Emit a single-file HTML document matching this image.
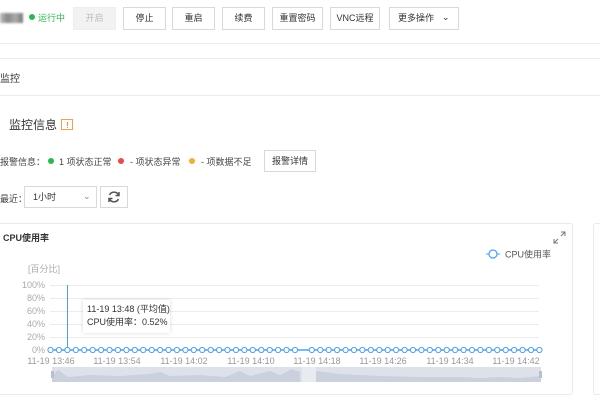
<!DOCTYPE html>
<html><head><meta charset="utf-8"><style>
*{box-sizing:border-box;margin:0;padding:0}
body{width:600px;height:400px;overflow:hidden;background:#fff;font-family:"Liberation Sans","Noto Sans CJK SC",sans-serif;color:#333;position:relative}
.a{position:absolute;white-space:nowrap}
.btn{position:absolute;top:7px;height:23px;border:1px solid #d9d9d9;background:#fff;font-size:9px;line-height:21px;text-align:center;color:#333}
.line{position:absolute;left:0;width:600px;height:1px;background:#e8ecf2}
.dot{position:absolute;width:6px;height:6px;border-radius:50%}
.t{font-size:9px;color:#444}
</style></head><body>
<div class="a" style="left:0;top:13px;width:23px;height:10px;background:linear-gradient(90deg,#bbb,#888,#aaa,#777);filter:blur(1px)"></div>
<div class="dot" style="left:29px;top:14px;background:#2db84d"></div>
<div class="a" style="left:38px;top:11px;font-size:9px;color:#2db84d">运行中</div>
<div class="btn" style="left:73px;width:43px;background:#f2f2f2;border-color:#eee;color:#bbb">开启</div>
<div class="btn" style="left:123px;width:43px">停止</div>
<div class="btn" style="left:172px;width:43px">重启</div>
<div class="btn" style="left:222px;width:43px">续费</div>
<div class="btn" style="left:272px;width:51px">重置密码</div>
<div class="btn" style="left:330px;width:50px">VNC远程</div>
<div class="btn" style="left:389px;width:70px;text-align:left;padding-left:8px">更多操作 <span style="position:absolute;left:52px;top:-1px;font-size:9px">&#8964;</span></div>
<div class="line" style="top:43px"></div>
<div class="line" style="top:58px"></div>
<div class="a" style="left:0;top:70px;font-size:10px;color:#333">监控</div>
<div class="line" style="top:95px"></div>
<div class="a" style="left:9px;top:116px;font-size:12px;color:#333">监控信息</div>
<div class="a" style="left:61px;top:119px;width:12px;height:11px;border:1px solid #f0a050"></div>
<div class="a" style="left:66.5px;top:121.5px;width:1px;height:4px;background:#f08a24"></div>
<div class="a" style="left:66.5px;top:127px;width:1px;height:1px;background:#f08a24"></div>
<div class="a t" style="left:0;top:155px">报警信息：</div>
<div class="dot" style="left:48px;top:158px;background:#2db84d"></div>
<div class="a t" style="left:59px;top:155px">1 项状态正常</div>
<div class="dot" style="left:118px;top:158px;background:#e84a4a"></div>
<div class="a t" style="left:130px;top:155px">- 项状态异常</div>
<div class="dot" style="left:189px;top:158px;background:#f0b030"></div>
<div class="a t" style="left:201px;top:155px">- 项数据不足</div>
<div class="btn" style="left:264px;top:150px;width:52px;height:22px">报警详情</div>
<div class="a t" style="left:0;top:192px">最近：</div>
<div class="a" style="left:24px;top:186px;width:73px;height:22px;border:1px solid #d9d9d9;font-size:9px;line-height:20px;padding-left:8px">1小时<span style="position:absolute;left:58px;top:-1px;color:#888">&#8964;</span></div>
<div class="a" style="left:100px;top:186px;width:28px;height:22px;border:1px solid #d9d9d9"></div>
<svg class="a" style="left:107px;top:190px" width="14" height="14" viewBox="0 0 14 14"><path d="M11.5 5A5 5 0 0 0 2.5 5M2.5 9a5 5 0 0 0 9 0" fill="none" stroke="#555" stroke-width="1.5"/><path d="M12 2v3.5H8.5M2 12V8.5h3.5" fill="none" stroke="#555" stroke-width="1.5"/></svg>
<div class="a" style="left:-3px;top:223px;width:576px;height:172px;border:1px solid #e8eaee;border-radius:3px"></div>
<div class="a" style="left:593px;top:223px;width:20px;height:172px;border:1px solid #e8eaee;border-radius:3px"></div>
<div class="a" style="left:3px;top:231px;font-size:9px;font-weight:bold;color:#333">CPU使用率</div>
<svg class="a" style="left:553px;top:231px" width="13" height="13" viewBox="0 0 13 13"><path d="M8 1h4v4M12 1L8 5M1 8v4h4M1 12l4-4" fill="none" stroke="#777" stroke-width="1"/></svg>
<svg class="a" style="left:0;top:240px" width="572" height="150" viewBox="0 240 572 150" font-family="Liberation Sans,Noto Sans CJK SC,sans-serif">
<line x1="486" y1="254" x2="500" y2="254" stroke="#4a9ff5" stroke-width="1"/><circle cx="493" cy="254" r="4" fill="#fff" stroke="#4a9ff5" stroke-width="1.2"/>
<text x="505" y="257.5" font-size="9" fill="#555">CPU使用率</text>
<text x="28" y="272" font-size="9" fill="#aaa">[百分比]</text>
<g stroke="#ececec" stroke-width="1">
<line x1="50" y1="285.5" x2="539" y2="285.5"/><line x1="50" y1="298.5" x2="539" y2="298.5"/><line x1="50" y1="311.5" x2="539" y2="311.5"/><line x1="50" y1="324.5" x2="539" y2="324.5"/><line x1="50" y1="337.5" x2="539" y2="337.5"/></g>
<g font-size="9" fill="#aaa" text-anchor="end">
<text x="45" y="288">100%</text><text x="45" y="301">80%</text><text x="45" y="314">60%</text><text x="45" y="327">40%</text><text x="45" y="340">20%</text><text x="45" y="353">0%</text></g>
<line x1="67.5" y1="285" x2="67.5" y2="350" stroke="#4a9ff5" stroke-width="1"/>
<line x1="50" y1="350" x2="539" y2="350" stroke="#4a9ff5" stroke-width="1.5"/>
<g id="pts" fill="#fff" stroke="#4a9ff5" stroke-width="1"></g>
<g font-size="9" fill="#999" text-anchor="middle">
<text x="51" y="364">11-19 13:46</text><text x="117" y="364">11-19 13:54</text><text x="184" y="364">11-19 14:02</text><text x="251" y="364">11-19 14:10</text><text x="317" y="364">11-19 14:18</text><text x="383" y="364">11-19 14:26</text><text x="450" y="364">11-19 14:34</text><text x="516" y="364">11-19 14:42</text></g>
<rect x="52" y="367" width="489" height="15" fill="#dde2ea"/>
<path d="M52 376 L58 370 L68 377 L90 375 L120 376 L150 374 L160 372 L170 376 L200 375 L225 377 L240 371 L250 376 L262 373 L270 371 L280 375 L292 369 L300 372 L300 382 L52 382Z" fill="#cad1dc"/>
<rect x="302" y="367" width="14" height="15" fill="#e8ebf0"/>
<path d="M316 371 L340 374 L380 376 L420 377 L460 377 L480 378 L500 377 L520 378 L541 376 L541 382 L316 382Z" fill="#cad1dc"/>
<rect x="51" y="371" width="3" height="7" fill="#b6c0ce"/><rect x="539" y="371" width="3" height="7" fill="#b6c0ce"/>
</svg>
<div class="a" style="left:83px;top:300px;width:87px;height:33px;background:#fff;box-shadow:0 0 4px rgba(0,0,0,.15);font-size:9px;color:#333;line-height:13px;padding:3px 4px">11-19 13:48 (平均值)<br>CPU使用率：0.52%</div>
<script>
var g=document.getElementById('pts'),s='';
for(var i=0;i<59;i++){var x=50.5+i*8.43;if(i==30)continue;s+='<circle cx="'+x.toFixed(1)+'" cy="350" r="2.6"/>';}
g.innerHTML=s;
</script>
</body></html>
